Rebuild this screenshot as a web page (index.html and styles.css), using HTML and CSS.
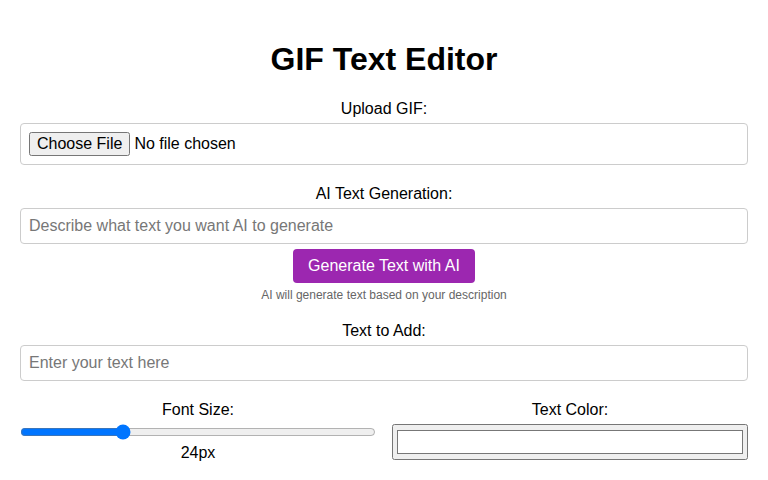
FILE: index.html
```html
<!DOCTYPE html>
<html>
<head>
<meta charset="utf-8">
<link rel="stylesheet" href="styles.css">
</head>
<body>
<div class="container">
  <h1 class="title">GIF Text Editor</h1>
  <div class="group">
    <label class="label">Upload GIF:</label>
    <div class="filebox"><input type="file" class="file" accept="image/gif"></div>
  </div>
  <div class="group">
    <label class="label">AI Text Generation:</label>
    <input type="text" class="text" placeholder="Describe what text you want AI to generate">
    <div class="center"><button class="ai-btn">Generate Text with AI</button></div>
    <div class="hint">AI will generate text based on your description</div>
  </div>
  <div class="group">
    <label class="label">Text to Add:</label>
    <input type="text" class="text" placeholder="Enter your text here">
  </div>
  <div class="row">
    <div class="col">
      <label class="label">Font Size:</label>
      <input type="range" class="range" min="10" max="60" value="24">
      <div class="value">24px</div>
    </div>
    <div class="col">
      <label class="label">Text Color:</label>
      <input type="color" class="color" value="#ffffff">
    </div>
  </div>
</div>
</body>
</html>
```
FILE: styles.css
```css
html, body { margin: 0; padding: 0; background: #fff; }
body { font-family: "Liberation Sans", Arial, sans-serif; color: #000; }
.container { padding: 20px; }
.title { text-align: center; font-size: 32px; margin: 21px 0 22px; line-height: 37px; }
.group { margin-bottom: 20px; }
.label { display: block; text-align: center; font-size: 16px; line-height: 18px; margin-bottom: 5px; }
.filebox { border: 1px solid #ccc; border-radius: 4px; padding: 8px; box-sizing: border-box; height: 42px; }
.file { font-family: "Liberation Sans", Arial, sans-serif; font-size: 16px; }
.text { display: block; width: 100%; box-sizing: border-box; height: 36px; padding: 8px; border: 1px solid #ccc; border-radius: 4px; font-family: "Liberation Sans", Arial, sans-serif; font-size: 16px; }
.text::placeholder { color: #777; }
.center { text-align: center; margin-top: 5px; }
.ai-btn { background: #9c27b0; color: #fff; border: none; border-radius: 4px; height: 34px; padding: 0 15px; font-family: "Liberation Sans", Arial, sans-serif; font-size: 16px; }
.hint { text-align: center; font-size: 12px; color: #666; margin-top: 5px; line-height: 14px; }
.row { display: flex; gap: 16px; }
.col { flex: 1; }
.range { display: block; width: 100%; margin: 0; height: 16px; }
.value { text-align: center; font-size: 16px; margin-top: 4px; }
.color { display: block; width: 100%; height: 36px; margin: 0; box-sizing: border-box; }
```
